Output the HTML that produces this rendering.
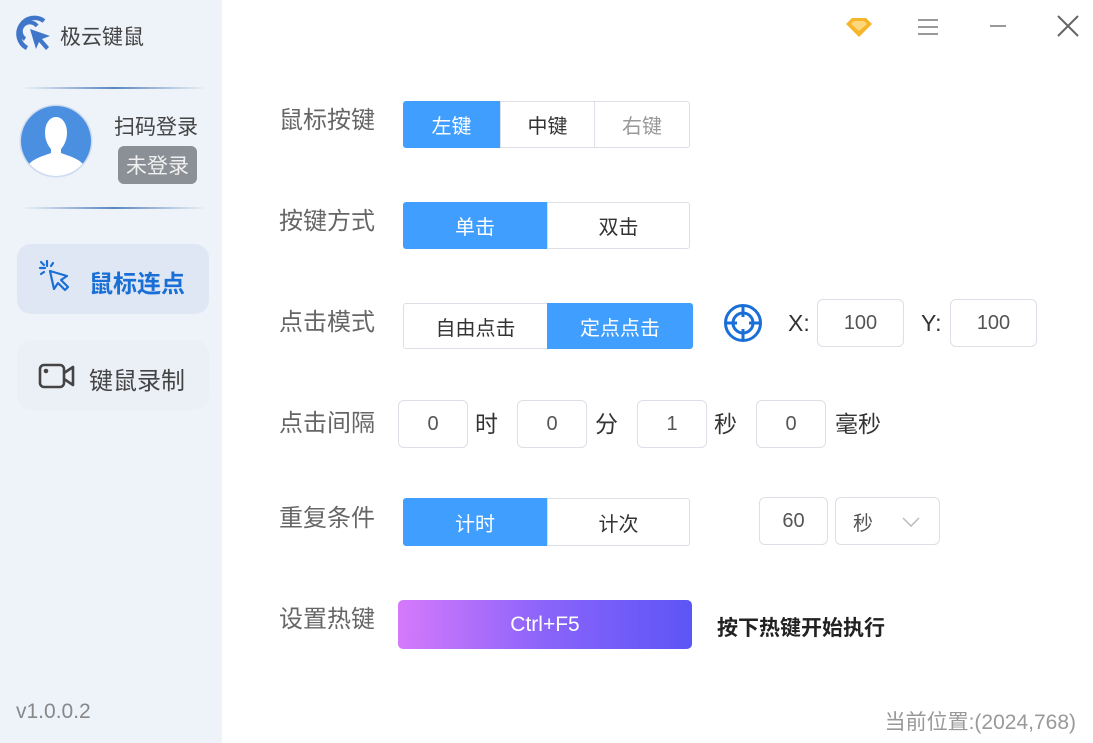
<!DOCTYPE html>
<html><head><meta charset="utf-8"><style>
*{margin:0;padding:0;box-sizing:border-box}
body{width:1093px;height:743px;position:relative;background:#fff;font-family:"Liberation Sans","Noto Sans CJK SC",sans-serif;overflow:hidden}
.a{position:absolute}
.side{left:0;top:0;width:222px;height:743px;background:#eef2f9}
.lbl{font-size:24px;color:#666;left:279px;line-height:30px}
.seg{position:absolute;border:1px solid #dcdfe6;background:#fff;color:#333;font-size:20px;display:flex;align-items:center;justify-content:center}
.on{background:#409eff;border-color:#409eff;color:#fff}
.box{position:absolute;border:1px solid #dcdfe6;border-radius:6px;background:#fff;color:#555;font-size:20px;display:flex;align-items:center;justify-content:center}
.u{position:absolute;font-size:23px;color:#333;line-height:30px}
</style></head><body>
<div class="a side"></div>
<svg class="a" style="left:12px;top:12px" width="42" height="42" viewBox="0 0 42 42">
<path d="M32 9A16 16 0 1 0 15 36" fill="none" stroke="#3f76c9" stroke-width="4.5"/>
<path d="M25 14A9 9 0 1 0 13 27" fill="none" stroke="#3f76c9" stroke-width="4"/>
<path d="M18 17L38 24L30 27L37 35L34 38L27 30L24 37Z" fill="#3f76c9"/>
</svg>
<div class="a" style="left:60px;top:21px;font-size:21px;color:#444">极云键鼠</div>
<div class="a" style="left:22px;top:87px;width:184px;height:2px;background:linear-gradient(90deg,transparent,#5a86c0,transparent)"></div>
<div class="a" style="left:22px;top:207px;width:184px;height:2px;background:linear-gradient(90deg,transparent,#5a86c0,transparent)"></div>
<svg class="a" style="left:19px;top:103px" width="74" height="76" viewBox="0 0 74 76">
<defs><clipPath id="c"><circle cx="37" cy="38" r="35"/></clipPath></defs>
<circle cx="37" cy="38" r="36.5" fill="#cfdcef"/>
<circle cx="37" cy="38" r="35" fill="#4a8fe0"/>
<g clip-path="url(#c)" fill="#fff"><path d="M26 30c0-10 5-16 11-16s11 6 11 16c0 8-4 14-6 16v4c8 3 20 6 24 14v12H8V64c4-8 16-11 24-14v-4c-2-2-6-8-6-16z"/></g>
</svg>
<div class="a" style="left:114px;top:111px;font-size:21px;color:#444">扫码登录</div>
<div class="a" style="left:118px;top:146px;width:79px;height:38px;background:#8b9096;border-radius:6px;color:#f0f0f0;font-size:21px;display:flex;align-items:center;justify-content:center">未登录</div>
<div class="a" style="left:17px;top:244px;width:192px;height:70px;background:#dfe7f4;border-radius:14px"></div>
<svg class="a" style="left:38px;top:259px" width="38" height="38" viewBox="0 0 38 38" fill="none" stroke="#1a6fd6" stroke-width="2.2" stroke-linecap="round" stroke-linejoin="round">
<path d="M12 12L16 30L20 24L27 31L30 28L23 21L29 17Z"/><path d="M9 2V7M2 9H7M3 3L6 6M15 4L13 7M3 15L6 13"/>
</svg>
<div class="a" style="left:89px;top:264px;font-size:24px;color:#1a6fd6;font-weight:bold">鼠标连点</div>
<div class="a" style="left:17px;top:340px;width:192px;height:70px;background:#ebeff6;border-radius:14px"></div>
<svg class="a" style="left:38px;top:362px" width="38" height="28" viewBox="0 0 38 28" fill="none" stroke="#444" stroke-width="2.6" stroke-linejoin="round">
<rect x="2" y="3" width="24" height="22" rx="4"/><path d="M26 11L35 5V23L26 17"/><circle cx="8" cy="9" r="1" fill="#444"/>
</svg>
<div class="a" style="left:89px;top:361px;font-size:24px;color:#444">键鼠录制</div>
<div class="a" style="left:16px;top:700px;font-size:21px;color:#888">v1.0.0.2</div>

<svg class="a" style="left:845px;top:16px" width="28" height="22" viewBox="0 0 28 22"><path d="M7 2H21L27 8L14 21L1 8Z" fill="#f7b52c"/><path d="M9 5H19L22 8L14 15L6 8Z" fill="#fdd77a"/></svg>
<div class="a" style="left:918px;top:19px;width:20px;height:2px;background:#999;box-shadow:0 7px 0 #999,0 14px 0 #999"></div>
<div class="a" style="left:990px;top:25px;width:16px;height:2px;background:#999"></div>
<svg class="a" style="left:1057px;top:15px" width="22" height="22" viewBox="0 0 22 22" stroke="#666" stroke-width="2"><path d="M1 1L21 21M21 1L1 21"/></svg>

<div class="a lbl" style="top:106px">鼠标按键</div>
<div class="seg on" style="left:403px;top:101px;width:97px;height:47px;border-radius:3px 0 0 3px">左键</div>
<div class="seg" style="left:500px;top:101px;width:95px;height:47px">中键</div>
<div class="seg" style="left:594px;top:101px;width:96px;height:47px;color:#999;border-radius:0 3px 3px 0">右键</div>

<div class="a lbl" style="top:207px">按键方式</div>
<div class="seg on" style="left:403px;top:202px;width:144px;height:47px;border-radius:3px 0 0 3px">单击</div>
<div class="seg" style="left:547px;top:202px;width:143px;height:47px;border-radius:0 3px 3px 0">双击</div>

<div class="a lbl" style="top:308px">点击模式</div>
<div class="seg" style="left:403px;top:303px;width:145px;height:46px;border-radius:3px 0 0 3px">自由点击</div>
<div class="seg on" style="left:547px;top:303px;width:146px;height:46px;border-radius:0 3px 3px 0">定点点击</div>
<svg class="a" style="left:723px;top:303px" width="40" height="40" viewBox="0 0 40 40" fill="none" stroke="#1a6fd6" stroke-width="3"><circle cx="20" cy="20" r="17.5"/><circle cx="20" cy="20" r="10"/><path d="M20 2V14M20 26V38M2 20H14M26 20H38"/></svg>
<div class="u" style="left:788px;top:308px">X:</div>
<div class="box" style="left:817px;top:299px;width:87px;height:48px">100</div>
<div class="u" style="left:921px;top:308px">Y:</div>
<div class="box" style="left:950px;top:299px;width:87px;height:48px">100</div>

<div class="a lbl" style="top:409px">点击间隔</div>
<div class="box" style="left:398px;top:400px;width:70px;height:48px">0</div><div class="u" style="left:475px;top:409px">时</div>
<div class="box" style="left:517px;top:400px;width:70px;height:48px">0</div><div class="u" style="left:595px;top:409px">分</div>
<div class="box" style="left:637px;top:400px;width:70px;height:48px">1</div><div class="u" style="left:714px;top:409px">秒</div>
<div class="box" style="left:756px;top:400px;width:70px;height:48px">0</div><div class="u" style="left:835px;top:409px">毫秒</div>

<div class="a lbl" style="top:504px">重复条件</div>
<div class="seg on" style="left:403px;top:498px;width:144px;height:48px;border-radius:3px 0 0 3px">计时</div>
<div class="seg" style="left:547px;top:498px;width:143px;height:48px;border-radius:0 3px 3px 0">计次</div>
<div class="box" style="left:759px;top:497px;width:69px;height:48px">60</div>
<div class="box" style="left:835px;top:497px;width:105px;height:48px;justify-content:flex-start;padding-left:17px">秒
<svg style="position:absolute;left:66px;top:19px" width="18" height="10" viewBox="0 0 18 10" fill="none" stroke="#bbb" stroke-width="1.5"><path d="M1 1L9 9L17 1"/></svg></div>

<div class="a lbl" style="top:605px">设置热键</div>
<div class="a" style="left:398px;top:600px;width:294px;height:49px;border-radius:5px;background:linear-gradient(90deg,#d579fb,#8a64fa,#5c55f6);color:#fff;font-size:21px;display:flex;align-items:center;justify-content:center">Ctrl+F5</div>
<div class="a" style="left:717px;top:612px;font-size:21px;font-weight:bold;color:#222">按下热键开始执行</div>

<div class="a" style="right:17px;top:706px;font-size:21px;color:#999">当前位置:(2024,768)</div>
</body></html>
